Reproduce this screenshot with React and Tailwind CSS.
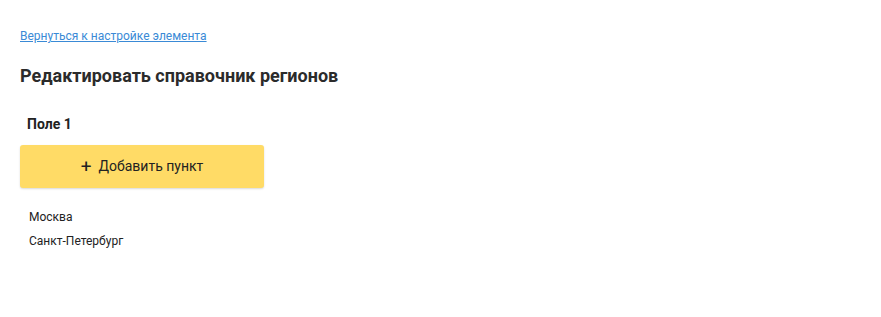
export default function App() {
  const items = ["Москва", "Санкт-Петербург"];

  return (
    <div className="min-h-screen bg-white font-['Roboto',sans-serif] text-[#222]">
      <div className="px-5 pt-[23px]">
        <a
          href="#"
          className="text-[12px] leading-[16px] text-[#3a8ad6] underline"
        >
          Вернуться к настройке элемента
        </a>
        <h1 className="mt-[17px] text-[18px] leading-[24px] font-bold text-[#2b2b2b]">
          Редактировать справочник регионов
        </h1>
        <div className="mt-[27px] pl-[7px] text-[14px] leading-[18px] font-bold text-[#222]">
          Поле 1
        </div>
        <button className="mt-[12px] flex h-[43px] w-[244px] items-center justify-center gap-[7px] rounded-[3px] bg-[#ffdb66] text-[14px] text-[#222] shadow-[0_1px_2px_rgba(0,0,0,0.15)]">
          <span className="text-[19px] leading-none">+</span>
          <span>Добавить пункт</span>
        </button>
        <ul className="mt-[21px] flex flex-col gap-[8px] pl-[9px] text-[12px] leading-[16px] text-[#222]">
          {items.map((item) => (
            <li key={item}>{item}</li>
          ))}
        </ul>
      </div>
    </div>
  );
}
